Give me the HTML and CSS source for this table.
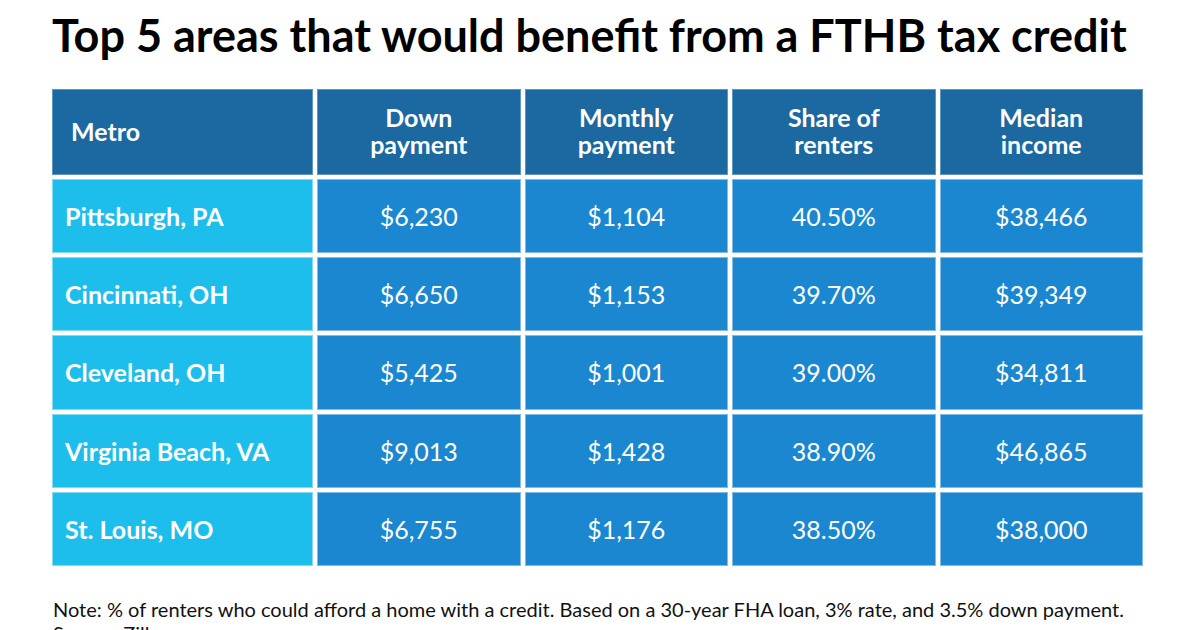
FILE: index.html
```html
<!DOCTYPE html>
<html lang="en">
<head>
<meta charset="utf-8">
<title>Top 5 areas that would benefit from a FTHB tax credit</title>
<link rel="stylesheet" href="styles.css">
</head>
<body>
<main class="page">
  <h1 class="title">Top 5 areas that would benefit from a FTHB tax credit</h1>
  <div class="table">
    <div class="cell head head-left">Metro</div>
    <div class="cell head">Down<br>payment</div>
    <div class="cell head">Monthly<br>payment</div>
    <div class="cell head">Share of<br>renters</div>
    <div class="cell head">Median<br>income</div>

    <div class="cell metro">Pittsburgh, PA</div>
    <div class="cell val">$6,230</div>
    <div class="cell val">$1,104</div>
    <div class="cell val">40.50%</div>
    <div class="cell val">$38,466</div>

    <div class="cell metro">Cincinnati, OH</div>
    <div class="cell val">$6,650</div>
    <div class="cell val">$1,153</div>
    <div class="cell val">39.70%</div>
    <div class="cell val">$39,349</div>

    <div class="cell metro">Cleveland, OH</div>
    <div class="cell val">$5,425</div>
    <div class="cell val">$1,001</div>
    <div class="cell val">39.00%</div>
    <div class="cell val">$34,811</div>

    <div class="cell metro">Virginia Beach, VA</div>
    <div class="cell val">$9,013</div>
    <div class="cell val">$1,428</div>
    <div class="cell val">38.90%</div>
    <div class="cell val">$46,865</div>

    <div class="cell metro">St. Louis, MO</div>
    <div class="cell val">$6,755</div>
    <div class="cell val">$1,176</div>
    <div class="cell val">38.50%</div>
    <div class="cell val">$38,000</div>
  </div>
  <p class="note">Note: % of renters who could afford a home with a credit. Based on a 30-year FHA loan, 3% rate, and 3.5% down payment.<br>Source: Zillow</p>
</main>
</body>
</html>
```
FILE: styles.css
```css
html, body {
  margin: 0;
  padding: 0;
  background: #ffffff;
  overflow: hidden;
}
.page {
  width: 1200px;
  height: 630px;
  box-sizing: border-box;
  padding: 8px 0 0 52px;
  font-family: Lato, "Open Sans", sans-serif;
  color: #000;
}
.title {
  margin: 0;
  font-size: 45px;
  line-height: 54px;
  font-weight: 700;
  color: #000;
  letter-spacing: 0;
}
.table {
  margin-top: 27px;
  width: 1091px;
  height: 477px;
  display: grid;
  grid-template-columns: 261px repeat(4, 1fr);
  grid-template-rows: 86px repeat(5, 1fr);
  gap: 4px;
}
.cell {
  box-sizing: border-box;
  display: flex;
  align-items: center;
  justify-content: center;
  text-align: center;
  color: #ffffff;
  font-size: 25px;
}
.head {
  background: #1c68a0;
  border: 1px solid #5f97c2;
  font-weight: 700;
  line-height: 27px;
  padding-bottom: 2px;
}
.head-left {
  justify-content: flex-start;
  text-align: left;
  padding-left: 18px;
}
.metro {
  background: #1dbeeb;
  border: 1px solid #86dbf4;
  font-weight: 700;
  justify-content: flex-start;
  text-align: left;
  padding-left: 12px;
}
.val {
  background: #1b87d1;
  border: 1px solid #7fbce8;
  font-weight: 400;
}
.note {
  margin: 31px 0 0 1px;
  font-size: 20px;
  line-height: 24px;
  color: #111;
}
```
